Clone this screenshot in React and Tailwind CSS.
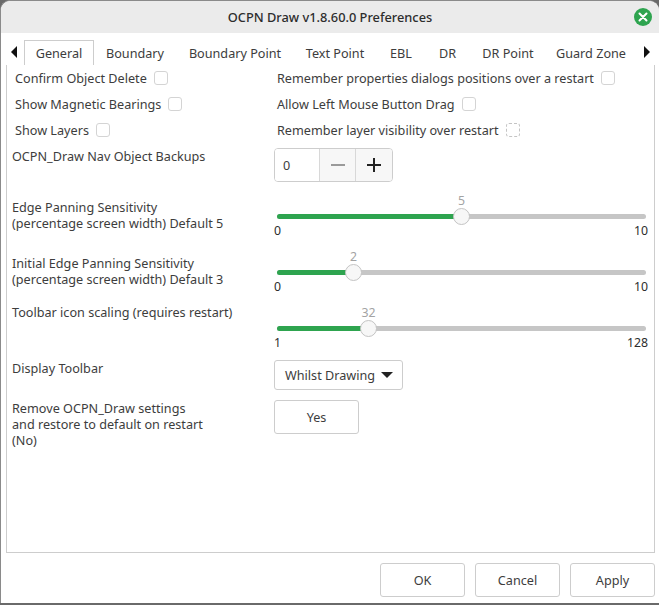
const font = { fontFamily: '"Noto Sans", sans-serif' };

function Check({ className = "" }) {
  return <span className={"inline-block w-[14px] h-[14px] rounded-[3px] border bg-white shrink-0 " + className} />;
}

function CheckRow({ label, width = "", dashed }) {
  return (
    <div className={"flex items-center h-[26px] " + width}>
      <span className="whitespace-nowrap">{label}</span>
      <Check className={"ml-[7px] " + (dashed ? "border-dashed border-[#c4c4c4]" : "border-[#d4d4d4]")} />
    </div>
  );
}

function Slider({ min, max, value, pct }) {
  return (
    <div className="relative w-[374px] h-[52px]">
      <div className="absolute left-[3px] top-[20px] w-[369px] h-[5px] rounded-full bg-[#c6c6c6]" />
      <div className="absolute left-[3px] top-[20px] h-[5px] rounded-full bg-[#2ea44f]" style={{ width: pct }} />
      <div className="absolute top-[14px] w-[17px] h-[17px] rounded-full bg-[#f7f7f7] border border-[#c4c4c4]" style={{ left: pct - 5 }} />
      <div className="absolute top-[-1px] w-[30px] text-center text-[#a3a3a3] text-[12.3px]" style={{ left: pct - 11.5 }}>{value}</div>
      <div className="absolute left-0 top-[29px] text-[12.3px] text-[#2c2c2c]">{min}</div>
      <div className="absolute right-0 top-[29px] text-[12.3px] text-[#2c2c2c]">{max}</div>
    </div>
  );
}

export default function App() {
  const tabs = [
    ["Boundary", "w-[82px]"],
    ["Boundary Point", "w-[118px]"],
    ["Text Point", "w-[82px]"],
    ["EBL", "w-[50px]"],
    ["DR", "w-[43px]"],
    ["DR Point", "w-[78px]"],
    ["Guard Zone", "w-[88px]"],
  ];
  return (
    <div style={font} className="w-[659px] h-[605px] flex flex-col overflow-hidden bg-[#6a6a6a] text-[12.65px] leading-[16px] text-[#3d3d3d]">
      <div className="flex-1 flex flex-col rounded-t-[10px] border-t border-l border-[#8a8a8a] bg-white overflow-hidden mb-[2px]">
        <div className="h-[32px] bg-[#ebebeb] flex items-center justify-center relative shrink-0">
          <span className="text-[12.8px] font-medium text-[#2d2d2d]">OCPN Draw v1.8.60.0 Preferences</span>
          <span className="absolute right-[7px] top-[7px] w-[18px] h-[18px] rounded-full bg-[#2ea44f] flex items-center justify-center">
            <svg width="10" height="10" viewBox="0 0 10 10"><path d="M1.5 1.5L8.5 8.5M8.5 1.5L1.5 8.5" stroke="#fff" strokeWidth="2" strokeLinecap="round" /></svg>
          </span>
        </div>
        <div className="flex h-[32px] items-end shrink-0 relative">
          <svg className="ml-[10px] mb-[7px] shrink-0" width="6" height="12" viewBox="0 0 6 12"><path d="M6 0V12L0 6Z" fill="#111" /></svg>
          <div className="ml-[7px] w-[70px] h-[25px] border border-b-0 border-[#cdcdcd] flex items-center justify-center bg-white">General</div>
          {tabs.map(([t, w]) => (
            <div key={t} className={"h-[25px] flex items-center justify-center whitespace-nowrap " + w}>{t}</div>
          ))}
          <svg className="ml-[9px] mb-[7px] shrink-0" width="6" height="12" viewBox="0 0 6 12"><path d="M0 0V12L6 6Z" fill="#111" /></svg>
        </div>
        <div className="ml-[5px] mr-[4px] h-[488px] border border-t-0 border-[#cdcdcd] shrink-0">
          <div className="flex flex-col pl-[8px]">
            <div className="flex"><CheckRow label="Confirm Object Delete" width="w-[262px]" /><CheckRow label="Remember properties dialogs positions over a restart" /></div>
            <div className="flex"><CheckRow label="Show Magnetic Bearings" width="w-[262px]" /><CheckRow label="Allow Left Mouse Button Drag" /></div>
            <div className="flex"><CheckRow label="Show Layers" width="w-[262px]" /><CheckRow label="Remember layer visibility over restart" dashed /></div>
          </div>
          <div className="flex pl-[5px] pt-[5px] h-[50px]">
            <div className="w-[262px]">OCPN_Draw Nav Object Backups</div>
            <div className="flex h-[34px] w-[119px] rounded-[4px] border border-[#cdcdcd] overflow-hidden">
              <div className="w-[45px] pl-[8px] flex items-center border-r border-[#d8d8d8] bg-white">0</div>
              <div className="w-[36px] flex items-center justify-center border-r border-[#d8d8d8] bg-[#f7f7f7]">
                <span className="w-[14px] h-[1.5px] bg-[#9a9a9a]" />
              </div>
              <div className="flex-1 flex items-center justify-center bg-[#f7f7f7] relative">
                <span className="w-[14px] h-[1.5px] bg-[#222]" />
                <span className="absolute w-[1.5px] h-[14px] bg-[#222]" />
              </div>
            </div>
          </div>
          <div className="flex pl-[5px] h-[56px] pt-[1px]">
            <div className="w-[262px] pt-[5px]">Edge Panning Sensitivity<br />(percentage screen width) Default 5</div>
            <Slider min="0" max="10" value="5" pct={184} />
          </div>
          <div className="flex pl-[5px] h-[56px] pt-[1px]">
            <div className="w-[262px] pt-[5px]">Initial Edge Panning Sensitivity<br />(percentage screen width) Default 3</div>
            <Slider min="0" max="10" value="2" pct={76} />
          </div>
          <div className="flex pl-[5px] h-[56px] pt-[1px]">
            <div className="w-[262px] -mt-[2px]">Toolbar icon scaling (requires restart)</div>
            <Slider min="1" max="128" value="32" pct={91} />
          </div>
          <div className="flex pl-[5px] h-[39px]">
            <div className="w-[262px] -mt-[1px]">Display Toolbar</div>
            <div className="w-[129px] h-[30px] -mt-[1px] rounded-[3px] border border-[#cdcdcd] flex items-center pl-[10px] gap-[6px] whitespace-nowrap">
              Whilst Drawing
              <svg width="12" height="6" viewBox="0 0 12 6"><path d="M0 0H12L6 6Z" fill="#222" /></svg>
            </div>
          </div>
          <div className="flex pl-[5px]">
            <div className="w-[262px]">Remove OCPN_Draw settings<br />and restore to default on restart<br />(No)</div>
            <div className="w-[85px] h-[34px] rounded-[3px] border border-[#cdcdcd] flex items-center justify-center">Yes</div>
          </div>
        </div>
        <div className="flex justify-end gap-[10px] mr-[4px] mt-[10px]">
          {["OK", "Cancel", "Apply"].map((b) => (
            <div key={b} className="w-[85px] h-[34px] rounded-[3px] border border-[#cdcdcd] flex items-center justify-center">{b}</div>
          ))}
        </div>
      </div>
    </div>
  );
}
